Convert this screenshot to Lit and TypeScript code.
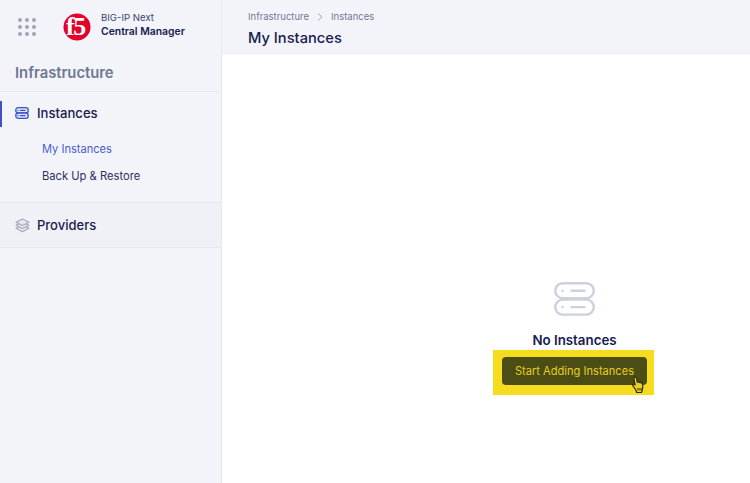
import { LitElement, html, css } from "lit";
import { customElement } from "lit/decorators.js";

@customElement("app-root")
export class AppRoot extends LitElement {
  static styles = css`
    :host { display: block; width: 750px; height: 483px; overflow: hidden; background: #fff; font-family: Inter, "Liberation Sans", sans-serif; color: #16204f; }
    * { box-sizing: border-box; }
    .app { display: flex; height: 483px; }
    .side { width: 222px; flex: none; background: #f3f4fa; border-right: 1px solid #e6e7ef; display: flex; flex-direction: column; }
    .brand { height: 53px; display: flex; align-items: center; padding-left: 18px; }
    .dots { width: 18px; height: 18px; display: grid; grid-template-columns: repeat(3, 4px); gap: 3px; margin-right: 27px; }
    .dots i { width: 4px; height: 4px; border-radius: 50%; background: #9ea5b6; }
    .logo { width: 28px; height: 28px; margin-right: 10px; display: block; }
    .logo text { font-family: "Liberation Serif", serif; font-weight: 700; font-size: 26px; fill: #fff; letter-spacing: -1.5px; }
    .brandtext { font-size: 9.6px; line-height: 14px; color: #39436e; margin-top: -3px; }
    .brandtext b { display: block; font-weight: 600; font-size: 10.4px; color: #16204f; }
    .section { height: 39px; padding: 11px 0 0 15px; font-size: 14.8px; font-weight: 600; color: #6f7891; line-height: 19px; border-bottom: 1px solid #e9eaf1; }
    .group { height: 111px; padding-top: 8px; border-bottom: 1px solid #e6e7ef; }
    .row { height: 26px; display: flex; align-items: center; padding-left: 15px; gap: 8px; font-size: 13.1px; font-weight: 500; position: relative; }
    .row svg { width: 14px; height: 14px; display: block; }
    .bar { position: absolute; left: 0; top: 1px; bottom: -1px; width: 2px; background: #3f51c9; }
    .sub { display: block; margin: 0 0 0 42px; font-size: 11.2px; line-height: 15px; color: #2a3360; }
    .sub.first { margin-top: 16px; margin-bottom: 12px; color: #4a5ccf; font-size: 11.1px; }
    .prov { height: 45px; background: #f0f1f7; border-bottom: 1px solid #e6e7ef; display: flex; align-items: center; padding-left: 15px; gap: 7px; font-size: 13px; font-weight: 500; }
    .prov svg { width: 15px; height: 15px; display: block; }
    .main { flex: 1; display: flex; flex-direction: column; min-width: 0; }
    .head { height: 54px; background: #f3f4fa; border-bottom: 1px solid #eceef5; padding: 10px 0 0 26px; }
    .crumbs { display: flex; align-items: center; font-size: 9.5px; line-height: 13px; color: #6f7795; }
    .crumbs svg { width: 6px; height: 8px; margin: 0 8px; display: block; }
    h1 { margin: 6px 0 0; font-size: 14.7px; line-height: 19px; font-weight: 500; color: #16204f; }
    .body { flex: 1; display: flex; flex-direction: column; align-items: center; padding-top: 228px; padding-left: 175px; }
    .empty { width: 41px; height: 35px; display: block; margin-left: 2px; }
    h2 { margin: 15px 0 0 2px; font-size: 13.3px; line-height: 17px; font-weight: 600; color: #16204f; }
    .hl { width: 161px; height: 45px; margin-top: 1px; background: #f5dc1f; position: relative; display: flex; justify-content: center; padding: 7px 0 0 2px; }
    button { width: 145px; height: 28px; padding: 0; border: 0; border-radius: 4px; background: #4b4d14; color: #e6cf22; font: 400 11.1px Inter, "Liberation Sans", sans-serif; }
    .cursor { position: absolute; left: 138px; top: 26px; width: 14px; height: 18px; }
  `;

  render() {
    return html`<div class="app">
      <aside class="side">
        <div class="brand">
          <div class="dots">${Array.from({ length: 9 }, () => html`<i></i>`)}</div>
          <svg class="logo" viewBox="0 0 28 28"><circle cx="14" cy="14" r="13.5" fill="#e4002b"/><text x="3" y="22">f5</text></svg>
          <div class="brandtext">BIG-IP Next<b>Central Manager</b></div>
        </div>
        <div class="section">Infrastructure</div>
        <div class="group">
          <div class="row"><span class="bar"></span>
            <svg viewBox="0 0 14 14" fill="#dfe3f7" stroke="#3f51c9" stroke-width="1.3" stroke-linecap="round"><rect x=".8" y="1.7" width="12.4" height="5.3" rx="2.3"/><rect x=".8" y="7" width="12.4" height="5.3" rx="2.3"/><path d="M5.5 4.3h4.5M5.5 9.7h4.5M3 4.3h.1M3 9.7h.1"/></svg>
            Instances</div>
          <span class="sub first">My Instances</span>
          <span class="sub">Back Up &amp; Restore</span>
        </div>
        <div class="prov">
          <svg viewBox="0 0 14 14" fill="#e6e8f0" stroke="#a3a8bb" stroke-width="1.1" stroke-linejoin="round"><path d="M1 9.6 7 12.8 13 9.6 7 6.6Z"/><path d="M1 6.8 7 9.8 13 6.8 7 3.8Z"/><path d="M7 1 13 4 7 7 1 4Z"/></svg>
          Providers</div>
      </aside>
      <main class="main">
        <header class="head">
          <div class="crumbs">Infrastructure<svg viewBox="0 0 6 8" fill="none" stroke="#a3a8bd" stroke-width="1"><path d="M1 .5 5 4 1 7.5"/></svg>Instances</div>
          <h1>My Instances</h1>
        </header>
        <div class="body">
          <svg class="empty" viewBox="0 0 41 35" fill="none" stroke="#cdd0dd" stroke-width="2.4" stroke-linecap="round"><rect x="1.2" y="1.2" width="38.6" height="15" rx="7.5"/><rect x="1.2" y="17.6" width="38.6" height="15" rx="7.5"/><path d="M17.5 8.7h13M17.5 25.1h13M8.5 8.7h.1M8.5 25.1h.1"/></svg>
          <h2>No Instances</h2>
          <div class="hl">
            <button>Start Adding Instances</button>
            <svg class="cursor" viewBox="0 0 14 18"><path d="M3.5 1.3c1-.6 1.8 0 2 1l.9 4 .5-.2c.7-.3 1.3 0 1.5.5.6-.4 1.3-.2 1.6.4.7-.2 1.3.2 1.5.8.5 2 .6 4.2-.3 6.4l-.6 2.3H5.7L4.8 14 1.8 9.7c-.5-.8 0-1.6.8-1.6.5 0 1 .3 1.5.8L3 2.8c-.1-.6 0-1.2.5-1.5Z" fill="#e9cf2a" stroke="#2e2c10" stroke-width="1.2" stroke-linejoin="round"/><path d="M7 12v2.5M9 12v2.5M11 12v2.5" stroke="#2e2c10"/></svg>
          </div>
        </div>
      </main>
    </div>`;
  }
}
